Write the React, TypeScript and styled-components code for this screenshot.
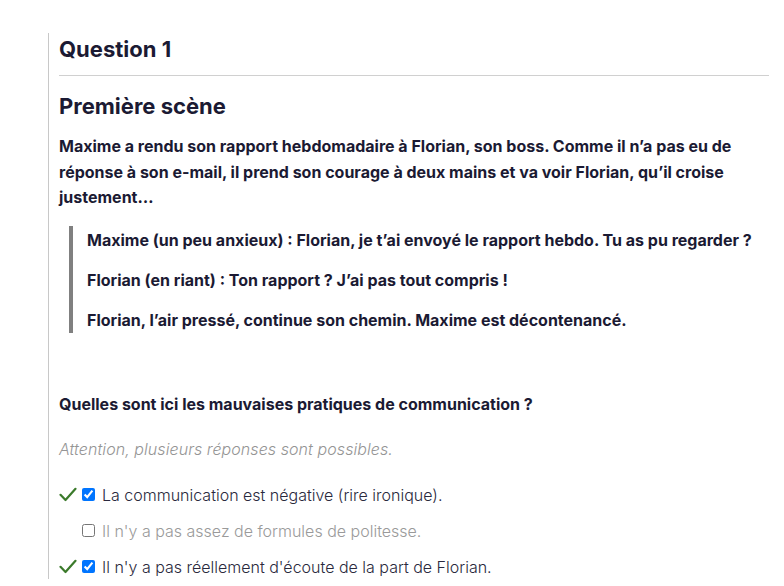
import React from 'react';
import styled, { createGlobalStyle } from 'styled-components';

const GlobalStyle = createGlobalStyle`
  html, body {
    margin: 0;
    padding: 0;
    background: #ffffff;
  }
  body {
    font-family: Inter, "Noto Sans", "Liberation Sans", sans-serif;
    color: #1b1a33;
  }
`;

type Option = { label: string; checked: boolean; correct: boolean };

const options: Option[] = [
  { label: 'La communication est négative (rire ironique).', checked: true, correct: true },
  { label: "Il n'y a pas assez de formules de politesse.", checked: false, correct: false },
  { label: "Il n'y a pas réellement d'écoute de la part de Florian.", checked: true, correct: true },
];

const dialogue = [
  'Maxime (un peu anxieux) : Florian, je t’ai envoyé le rapport hebdo. Tu as pu regarder ?',
  'Florian (en riant) : Ton rapport ? J’ai pas tout compris !',
  'Florian, l’air pressé, continue son chemin. Maxime est décontenancé.',
];

const CheckMark: React.FC<{ visible: boolean }> = ({ visible }) => (
  <MarkSlot>
    {visible && (
      <svg width="18" height="15" viewBox="0 0 18 15" fill="none">
        <path d="M1.5 7.8 L6.5 13 L16.5 1.8" stroke="#3b7a2b" strokeWidth="2.2" strokeLinecap="round" strokeLinejoin="round" />
      </svg>
    )}
  </MarkSlot>
);

const App: React.FC = () => {
  return (
    <Page>
      <GlobalStyle />
      <Panel>
        <QuestionHeader>
          <QuestionTitle>Question 1</QuestionTitle>
        </QuestionHeader>
        <SceneTitle>Première scène</SceneTitle>
        <Intro>
          Maxime a rendu son rapport hebdomadaire à Florian, son boss. Comme il n’a pas eu de
          réponse à son e-mail, il prend son courage à deux mains et va voir Florian, qu’il croise
          justement…
        </Intro>
        <Quote>
          {dialogue.map((line, index) => (
            <QuoteLine key={index}>{line}</QuoteLine>
          ))}
        </Quote>
        <Prompt>Quelles sont ici les mauvaises pratiques de communication ?</Prompt>
        <Hint>Attention, plusieurs réponses sont possibles.</Hint>
        <OptionList>
          {options.map((option, index) => (
            <OptionRow key={index}>
              <CheckMark visible={option.correct} />
              <Box type="checkbox" checked={option.checked} readOnly />
              <OptionLabel $muted={!option.checked}>{option.label}</OptionLabel>
            </OptionRow>
          ))}
        </OptionList>
      </Panel>
    </Page>
  );
};

export default App;

const Page = styled.div`
  padding: 33px 15px 0 48px;
`;

const Panel = styled.div`
  border-left: 1px solid #c8c8c8;
  padding-left: 10px;
  padding-top: 3px;
`;

const QuestionHeader = styled.div`
  border-bottom: 1px solid #d0d0d0;
  padding-bottom: 12px;
`;

const QuestionTitle = styled.h2`
  margin: 0;
  font-size: 22px;
  line-height: 27px;
  font-weight: 700;
`;

const SceneTitle = styled.h3`
  margin: 17px 0 14px;
  font-size: 22px;
  line-height: 27px;
  font-weight: 700;
`;

const Intro = styled.p`
  margin: 0;
  font-size: 16px;
  line-height: 25.5px;
  font-weight: 700;
  padding-right: 20px;
`;

const Quote = styled.div`
  margin: 15px 0 0 10px;
  border-left: 4px solid #808080;
  padding: 2px 0 0 14px;
`;

const QuoteLine = styled.p`
  margin: 0;
  font-size: 16px;
  line-height: 25px;
  font-weight: 700;
  & + & {
    margin-top: 15px;
  }
`;

const Prompt = styled.p`
  margin: 58px 0 0;
  font-size: 16px;
  line-height: 26px;
  font-weight: 700;
`;

const Hint = styled.p`
  margin: 19px 0 0;
  font-size: 16px;
  line-height: 26px;
  font-style: italic;
  font-weight: 300;
  letter-spacing: 0.07px;
  color: #959595;
`;

const OptionList = styled.div`
  margin-top: 21px;
  display: flex;
  flex-direction: column;
  gap: 12px;
`;

const OptionRow = styled.label`
  display: flex;
  align-items: center;
  height: 24px;
`;

const MarkSlot = styled.span`
  width: 20px;
  height: 15px;
  display: inline-flex;
  align-items: center;
`;

const Box = styled.input`
  width: 13px;
  height: 13px;
  margin: 0 7px 0 3px;
  accent-color: #0075ff;
`;

const OptionLabel = styled.span<{ $muted: boolean }>`
  font-size: 16px;
  line-height: 24px;
  font-weight: 300;
  color: ${({ $muted }) => ($muted ? '#9a9a9a' : '#2a293d')};
`;
